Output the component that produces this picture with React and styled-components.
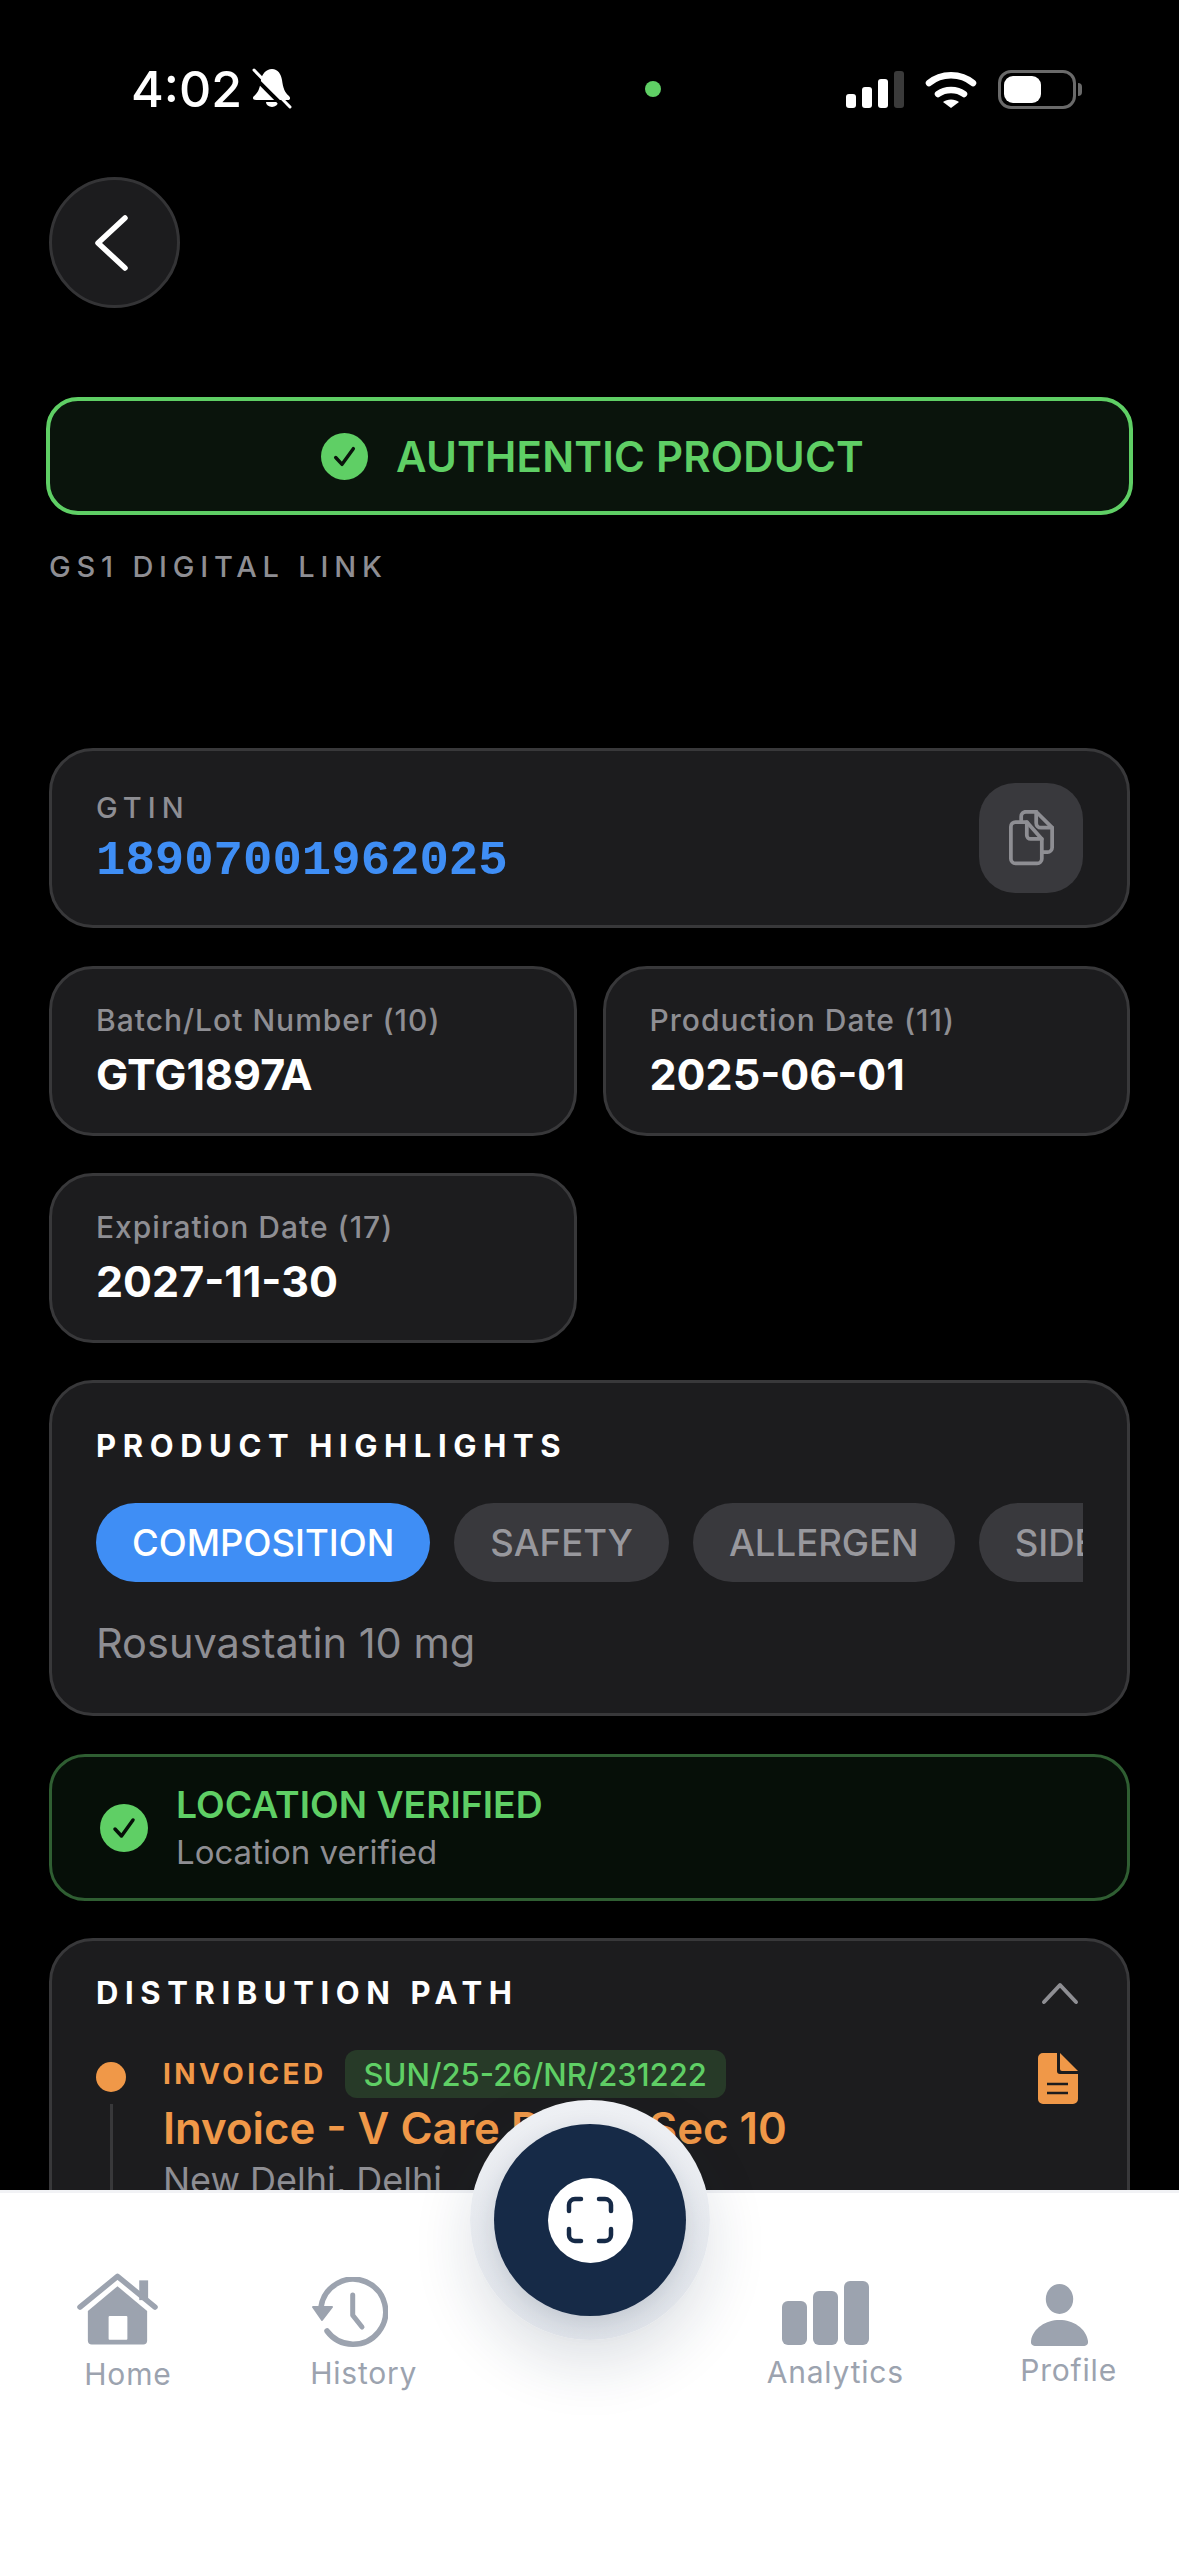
import React from 'react';
import styled, { createGlobalStyle } from 'styled-components';

const GlobalStyle = createGlobalStyle`
  html, body {
    margin: 0;
    padding: 0;
    background: #000;
    font-family: Inter, "Noto Sans", sans-serif;
  }
  * { box-sizing: border-box; }
`;

const Page = styled.div`
  width: 1179px;
  height: 2556px;
  display: flex;
  flex-direction: column;
  position: relative;
  overflow: hidden;
  background: #000;
`;

const Content = styled.main`
  flex: 1;
  min-height: 0;
  overflow: hidden;
  padding: 60px 49px 0;
`;

const StatusBar = styled.div`
  height: 58px;
  display: flex;
  align-items: center;
  padding: 0 54px 0 82px;
  color: #fff;
`;

const Time = styled.span`
  font-size: 50px;
  line-height: 58px;
  font-weight: 500;
  width: 121px;
`;

const CameraDot = styled.span`
  width: 16px;
  height: 16px;
  margin-left: 353px;
  border-radius: 50%;
  background: #5fcf65;
`;

const StatusIcons = styled.div`
  margin-left: auto;
  display: flex;
  align-items: center;
  gap: 21px;
`;

const SignalBars = styled.div`
  display: flex;
  align-items: flex-end;
  gap: 6px;
  height: 38px;
`;

const SignalBar = styled.span`
  width: 10px;
  height: ${(p) => p.$h}px;
  border-radius: 3px;
  background: ${(p) => (p.$off ? '#3a3a3a' : '#fff')};
`;

const Battery = styled.div`
  width: 78px;
  height: 39px;
  padding: 3px;
  border: 3px solid #6a6a6a;
  border-radius: 13px;
  position: relative;
`;

const BatteryFill = styled.div`
  width: 37px;
  height: 100%;
  border-radius: 9px;
  background: #fff;
`;

const BatteryNub = styled.span`
  position: absolute;
  right: -9px;
  top: 10px;
  width: 4px;
  height: 13px;
  border-radius: 0 4px 4px 0;
  background: #6a6a6a;
`;

const BackButton = styled.button`
  width: 131px;
  height: 131px;
  margin-top: 59px;
  padding: 0;
  display: flex;
  align-items: center;
  justify-content: center;
  border-radius: 50%;
  border: 3px solid #343436;
  background: #1c1c1e;
`;

const Banner = styled.div`
  height: 118px;
  margin: 89px -3px 0;
  display: flex;
  align-items: center;
  justify-content: center;
  gap: 28px;
  border: 4px solid #5fcf65;
  border-radius: 32px;
  background: #0a140c;
  color: #5fcf65;
  font-size: 42px;
  font-weight: 600;
  letter-spacing: 0.2px;
  padding-left: 6px;
`;

const LinkLabel = styled.div`
  margin: 35px 0 164px;
  font-size: 29px;
  line-height: 34px;
  font-weight: 500;
  letter-spacing: 5.8px;
  color: #8e8e93;
`;

const Card = styled.section`
  border: 3px solid #38383a;
  border-radius: 44px;
  background: #1c1c1e;
  padding: 0 44px;
`;

const GtinCard = styled(Card)`
  height: 180px;
  margin-bottom: 38px;
  display: flex;
  align-items: center;
  justify-content: space-between;
`;

const GtinLabel = styled.div`
  font-size: 29px;
  line-height: 32px;
  font-weight: 500;
  letter-spacing: 6px;
  color: #8e8e93;
`;

const GtinValue = styled.div`
  margin: 11px 0 -3px;
  font-family: "Liberation Mono", monospace;
  font-size: 49px;
  line-height: 52px;
  font-weight: 700;
  color: #3f8ef5;
`;

const CopyButton = styled.button`
  width: 104px;
  height: 110px;
  padding: 0;
  display: flex;
  align-items: center;
  justify-content: center;
  border: none;
  border-radius: 36px;
  background: #39393d;
`;

const FieldGrid = styled.div`
  display: grid;
  grid-template-columns: 1fr 1fr;
  column-gap: 26px;
  row-gap: 37px;
  margin-bottom: 37px;
`;

const FieldCard = styled(Card)`
  height: 170px;
  padding-top: 33px;
`;

const FieldLabel = styled.div`
  font-size: 30px;
  line-height: 36px;
  font-weight: 500;
  letter-spacing: 1px;
  color: #8e8e93;
`;

const FieldValue = styled.div`
  margin-top: 11px;
  font-size: 43px;
  line-height: 50px;
  font-weight: 700;
  color: #fff;
`;

const SectionTitle = styled.h2`
  margin: 0;
  font-size: 31px;
  line-height: 38px;
  font-weight: 700;
  letter-spacing: 6.6px;
  color: #fff;
`;

const HighlightsCard = styled(Card)`
  height: 336px;
  padding-top: 44px;
  margin-bottom: 38px;
`;

const ChipRow = styled.div`
  display: flex;
  gap: 24px;
  margin-top: 38px;
  overflow: hidden;
`;

const Chip = styled.span`
  flex: none;
  height: 79px;
  padding: 0 36px;
  display: flex;
  align-items: center;
  border-radius: 40px;
  font-size: 36.5px;
  font-weight: 500;
  background: ${(p) => (p.$active ? '#3f8ef5' : '#39393d')};
  color: ${(p) => (p.$active ? '#fff' : '#98989d')};
`;

const HighlightText = styled.p`
  margin: 36px 0 0;
  font-size: 41.5px;
  line-height: 50px;
  color: #8e8e93;
`;

const LocationCard = styled.section`
  height: 147px;
  margin-bottom: 37px;
  padding: 0 46px 0 48px;
  display: flex;
  align-items: center;
  gap: 28px;
  border: 3px solid #2f5e32;
  border-radius: 36px;
  background: #060f08;
`;

const LocationTitle = styled.div`
  font-size: 37.3px;
  line-height: 42px;
  font-weight: 600;
  color: #5fcf65;
`;

const LocationText = styled.div`
  margin-top: 7px;
  font-size: 33px;
  line-height: 38px;
  color: #8e8e93;
`;

const PathCard = styled(Card)`
  height: 400px;
  padding-top: 33px;
`;

const PathHeader = styled.div`
  display: flex;
  align-items: center;
  justify-content: space-between;
  padding-right: 4px;
`;

const StepRow = styled.div`
  display: flex;
  margin-top: 38px;
`;

const StepRail = styled.div`
  width: 67px;
  flex: none;
  display: flex;
  flex-direction: column;
  padding-top: 12px;
`;

const StepDot = styled.span`
  width: 30px;
  height: 30px;
  border-radius: 50%;
  background: #f09848;
`;

const StepLine = styled.span`
  width: 3px;
  height: 180px;
  margin: 12px 0 0 14px;
  background: #38383a;
`;

const StepBody = styled.div`
  flex: 1;
  min-width: 0;
`;

const StepTop = styled.div`
  display: flex;
  align-items: flex-start;
  gap: 18px;
`;

const StepStatus = styled.span`
  font-size: 28px;
  line-height: 48px;
  font-weight: 700;
  letter-spacing: 3.4px;
  color: #f09848;
`;

const InvoiceBadge = styled.span`
  height: 48px;
  padding: 0 19px;
  display: flex;
  align-items: center;
  border-radius: 12px;
  background: #273a28;
  color: #5fcf65;
  font-size: 31px;
  font-weight: 500;
`;

const DocIcon = styled.svg`
  margin: 3px 5px 0 auto;
`;

const StepTitle = styled.div`
  margin-top: -1px;
  font-size: 43.7px;
  line-height: 52px;
  font-weight: 600;
  color: #f09848;
`;

const StepPlace = styled.div`
  margin-top: 4px;
  font-size: 36px;
  line-height: 42px;
  color: #8e8e93;
`;

const TabBar = styled.nav`
  flex: none;
  height: 366px;
  position: relative;
  display: grid;
  grid-template-columns: repeat(5, 1fr);
  border-top: 3px solid #f1f2f5;
  background: #fff;
`;

const TabItem = styled.div`
  display: flex;
  flex-direction: column;
  align-items: center;
  padding-top: ${(p) => p.$top}px;
`;

const TabLabel = styled.span`
  margin-left: ${(p) => p.$ml || 20}px;
  margin-top: ${(p) => p.$mt}px;
  font-size: 30px;
  line-height: 36px;
  letter-spacing: 0.8px;
  color: #9ca3af;
`;

const ScanRing = styled.div`
  position: absolute;
  left: 470px;
  top: -93px;
  width: 240px;
  height: 240px;
  padding: 24px;
  border-radius: 50%;
  background: linear-gradient(#eef0f4, #e0e4ea);
  box-shadow: 0 24px 60px rgba(22, 42, 71, 0.14);
`;

const ScanButton = styled.button`
  width: 192px;
  height: 192px;
  padding: 0;
  display: flex;
  align-items: center;
  justify-content: center;
  border: none;
  border-radius: 50%;
  background: #162a47;
  box-shadow: 0 8px 24px rgba(22, 42, 71, 0.16);
`;

const ScanFace = styled.span`
  width: 85px;
  height: 85px;
  display: flex;
  align-items: center;
  justify-content: center;
  border-radius: 50%;
  background: #fff;
`;

const CheckBadge = ({ size, tick }) => (
  <svg width={size} height={size} viewBox="0 0 48 48" style={{ flex: 'none' }}>
    <circle cx="24" cy="24" r="24" fill="#5fcf65" />
    <path d="M15 25l6.5 7L33 16" fill="none" stroke={tick} strokeWidth="3.5" strokeLinecap="round" strokeLinejoin="round" />
  </svg>
);

const BellOff = () => (
  <svg width="40" height="42" viewBox="0 0 40 42">
    <path d="M20 1C14 1 10 6 9 12 8 20 6 25 2 28 0 30 1 32 4 32H36C38 32 39 30 37 28 33 25 31 20 30 12 29 6 26 1 20 1Z" fill="#fff" />
    <path d="M14 34a6 5 0 0 0 12 0z" fill="#fff" />
    <path d="M-1 6L34 41" stroke="#000" strokeWidth="4" />
    <path d="M2 2L38 39" stroke="#fff" strokeWidth="3" strokeLinecap="round" />
  </svg>
);

const Wifi = () => (
  <svg width="52" height="37" viewBox="0 0 50 37">
    <path d="M3 12C15 1.5 35 1.5 47 12" fill="none" stroke="#fff" strokeWidth="6.5" strokeLinecap="round" />
    <path d="M12 23C19 17.5 31 17.5 38 23" fill="none" stroke="#fff" strokeWidth="6.5" strokeLinecap="round" />
    <path d="M17 31C21 27.5 29 27.5 33 31L25 37Z" fill="#fff" />
  </svg>
);

const CopyIcon = () => (
  <svg width="45" height="56" viewBox="0 0 48 58" fill="none" stroke="#8e8e93" strokeWidth="4" strokeLinejoin="round" strokeLinecap="round">
    <path d="M13 10V6a5 5 0 0 1 5-5H29L46 18V39a5 5 0 0 1-5 5H35" />
    <path d="M29 1V13a5 5 0 0 0 5 5H46" />
    <path d="M7 12H19L35 30V51a5 5 0 0 1-5 5H7a5 5 0 0 1-5-5V17a5 5 0 0 1 5-5Z" />
    <path d="M19 12V26a4 4 0 0 0 4 4H35" />
  </svg>
);

const HomeIcon = () => (
  <svg width="81" height="73" viewBox="0 0 82 73">
    <path d="M63 7h9v20h-9z" fill="#9ca3af" />
    <path d="M3 34L41 3L79 34" fill="none" stroke="#9ca3af" strokeWidth="5.5" strokeLinecap="round" strokeLinejoin="round" />
    <path d="M41 13L71 38V68a4 4 0 0 1-4 4H15a4 4 0 0 1-4-4V38Z" fill="#9ca3af" />
    <rect x="32" y="43" width="19" height="24" rx="1" fill="#fff" />
  </svg>
);

const HistoryIcon = () => (
  <svg width="77" height="70" viewBox="0 0 77 70" style={{ marginLeft: -8 }}>
    <path d="M10 30A32.5 32.5 0 1 1 16 54" fill="none" stroke="#9ca3af" strokeWidth="5.5" strokeLinecap="round" />
    <path d="M2 30H21L11 43Z" fill="#9ca3af" stroke="#9ca3af" strokeWidth="2" strokeLinejoin="round" />
    <path d="M41.7 18V38.3L51 50" fill="none" stroke="#9ca3af" strokeWidth="5" strokeLinecap="round" strokeLinejoin="round" />
  </svg>
);

const AnalyticsIcon = () => (
  <svg width="87" height="64" viewBox="0 0 87 64" fill="#9ca3af">
    <rect x="0" y="20" width="25" height="44" rx="6" />
    <rect x="31" y="10" width="25" height="54" rx="6" />
    <rect x="62" y="0" width="25" height="64" rx="6" />
  </svg>
);

const ProfileIcon = () => (
  <svg width="57" height="62" viewBox="0 0 57 62" fill="#9ca3af" style={{ marginLeft: -4 }}>
    <ellipse cx="28.5" cy="15" rx="13.7" ry="15" />
    <path d="M4 62H53a4 4 0 0 0 4-5C55 44 42 36 28.5 36S2 44 0 57a4 4 0 0 0 4 5Z" />
  </svg>
);

const fields = [
  { label: 'Batch/Lot Number (10)', value: 'GTG1897A' },
  { label: 'Production Date (11)', value: '2025-06-01' },
  { label: 'Expiration Date (17)', value: '2027-11-30' },
];

const chips = ['COMPOSITION', 'SAFETY', 'ALLERGEN', 'SIDE EFFECTS'];

export default function App() {
  return (
    <Page>
      <GlobalStyle />
      <Content>
        <StatusBar>
          <Time>4:02</Time>
          <BellOff />
          <CameraDot />
          <StatusIcons>
            <SignalBars>
              <SignalBar $h={14} />
              <SignalBar $h={21} />
              <SignalBar $h={29} />
              <SignalBar $h={37} $off />
            </SignalBars>
            <Wifi />
            <Battery>
              <BatteryFill />
              <BatteryNub />
            </Battery>
          </StatusIcons>
        </StatusBar>

        <BackButton aria-label="Back">
          <svg width="40" height="60" viewBox="0 0 40 60" fill="none" style={{ marginLeft: -6 }}>
            <path d="M33 5L6 30L33 55" stroke="#fff" strokeWidth="5.5" strokeLinecap="round" strokeLinejoin="round" />
          </svg>
        </BackButton>

        <Banner>
          <CheckBadge size={47} tick="#0a140c" />
          AUTHENTIC PRODUCT
        </Banner>
        <LinkLabel>GS1 DIGITAL LINK</LinkLabel>

        <GtinCard>
          <div>
            <GtinLabel>GTIN</GtinLabel>
            <GtinValue>18907001962025</GtinValue>
          </div>
          <CopyButton aria-label="Copy">
            <CopyIcon />
          </CopyButton>
        </GtinCard>

        <FieldGrid>
          {fields.map((field) => (
            <FieldCard key={field.label}>
              <FieldLabel>{field.label}</FieldLabel>
              <FieldValue>{field.value}</FieldValue>
            </FieldCard>
          ))}
        </FieldGrid>

        <HighlightsCard>
          <SectionTitle>PRODUCT HIGHLIGHTS</SectionTitle>
          <ChipRow>
            {chips.map((chip, i) => (
              <Chip key={chip} $active={i === 0}>
                {chip}
              </Chip>
            ))}
          </ChipRow>
          <HighlightText>Rosuvastatin 10 mg</HighlightText>
        </HighlightsCard>

        <LocationCard>
          <CheckBadge size={48} tick="#060f08" />
          <div>
            <LocationTitle>LOCATION VERIFIED</LocationTitle>
            <LocationText>Location verified</LocationText>
          </div>
        </LocationCard>

        <PathCard>
          <PathHeader>
            <SectionTitle>DISTRIBUTION PATH</SectionTitle>
            <svg width="38" height="24" viewBox="0 0 38 24" fill="none">
              <path d="M3 21L19 4L35 21" stroke="#8e8e93" strokeWidth="4" strokeLinecap="round" strokeLinejoin="round" />
            </svg>
          </PathHeader>
          <StepRow>
            <StepRail>
              <StepDot />
              <StepLine />
            </StepRail>
            <StepBody>
              <StepTop>
                <StepStatus>INVOICED</StepStatus>
                <InvoiceBadge>SUN/25-26/NR/231222</InvoiceBadge>
                <DocIcon width="40" height="51" viewBox="0 0 40 51">
                  <path d="M5 0H19V18a3 3 0 0 0 3 3H40V46a5 5 0 0 1-5 5H5a5 5 0 0 1-5-5V5a5 5 0 0 1 5-5Z" fill="#f09848" />
                  <path d="M22 0L40 18H24a2 2 0 0 1-2-2Z" fill="#f09848" />
                  <path d="M9 31H30M9 40H30" stroke="#1c1c1e" strokeWidth="2.5" />
                </DocIcon>
              </StepTop>
              <StepTitle>Invoice - V Care Drugs Sec 10</StepTitle>
              <StepPlace>New Delhi, Delhi</StepPlace>
            </StepBody>
          </StepRow>
        </PathCard>
      </Content>

      <TabBar>
        <TabItem $top={80}>
          <HomeIcon />
          <TabLabel $mt={10}>Home</TabLabel>
        </TabItem>
        <TabItem $top={84}>
          <HistoryIcon />
          <TabLabel $mt={8}>History</TabLabel>
        </TabItem>
        <div />
        <TabItem $top={88}>
          <AnalyticsIcon />
          <TabLabel $mt={9}>Analytics</TabLabel>
        </TabItem>
        <TabItem $top={91}>
          <ProfileIcon />
          <TabLabel $mt={6} $ml={15}>Profile</TabLabel>
        </TabItem>
        <ScanRing>
          <ScanButton aria-label="Scan">
            <ScanFace>
              <svg width="48" height="48" viewBox="0 0 48 48" fill="none" stroke="#162a47" strokeWidth="4.5" strokeLinecap="round">
                <path d="M3 15V9a6 6 0 0 1 6-6H15" />
                <path d="M33 3H39a6 6 0 0 1 6 6V15" />
                <path d="M45 33V39a6 6 0 0 1-6 6H33" />
                <path d="M15 45H9a6 6 0 0 1-6-6V33" />
              </svg>
            </ScanFace>
          </ScanButton>
        </ScanRing>
      </TabBar>
    </Page>
  );
}
